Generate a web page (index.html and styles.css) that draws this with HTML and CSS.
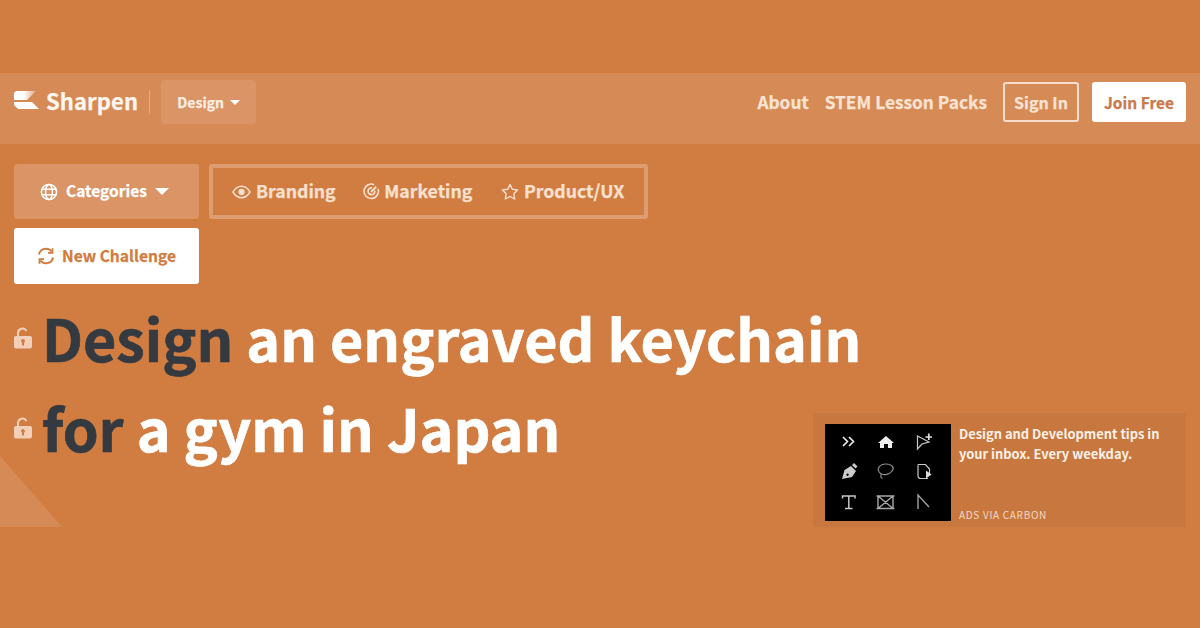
FILE: index.html
```html
<!DOCTYPE html>
<html lang="en">
<head>
<meta charset="utf-8">
<title>Sharpen</title>
<link rel="stylesheet" href="styles.css">
</head>
<body>
<div class="page">
  <nav class="nav">
    <div class="nav-left">
      <svg class="logo" viewBox="0 0 26 18"><defs><linearGradient id="lg" x1="0" x2="1"><stop offset="0" stop-color="#fff"/><stop offset=".45" stop-color="#fff"/><stop offset="1" stop-color="#fff" stop-opacity=".25"/></linearGradient></defs><path d="M2 0H22L13 9H0V2Z" fill="url(#lg)"/><path d="M0 11H18L25 18H4L0 14Z" fill="#fff"/></svg>
      <span class="brand">Sharpen</span>
      <span class="divider"></span>
      <span class="design-btn">Design <i class="caret small"></i></span>
    </div>
    <div class="nav-right">
      <a class="nav-link">About</a>
      <a class="nav-link">STEM Lesson Packs</a>
      <a class="btn-outline">Sign In</a>
      <a class="btn-white">Join Free</a>
    </div>
  </nav>
  <section class="filters">
    <div class="filter-row">
      <div class="categories">
        <svg class="ico big" viewBox="0 0 18 18" fill="none" stroke="#fff" stroke-width="1.5"><circle cx="9" cy="9" r="7.6"/><ellipse cx="9" cy="9" rx="3.4" ry="7.6"/><path d="M1.6 6.3H16.4M1.6 11.700H16.4"/></svg>
        <span class="label">Categories</span><i class="caret"></i>
      </div>
      <div class="tabs">
        <span class="tab"><svg class="ico wide" viewBox="0 0 20 16" fill="none" stroke="currentColor" stroke-width="1.5"><path d="M1 8C3.5 4 6.5 2 10 2s6.500 2 9 6c-2.500 4-5.500 6-9 6s-6.500-2-9-6Z"/><circle cx="10" cy="8" r="3.300" fill="currentColor" stroke="none"/></svg><span class="label">Branding</span></span>
        <span class="tab tab-tight"><svg class="ico" viewBox="0 0 18 18" fill="none" stroke="currentColor" stroke-width="1.700"><path d="M15.800 6A7.600 7.600 0 1 1 11.800 1.800"/><path d="M12.500 8.200A3.600 3.600 0 1 1 9.500 5.200"/><path d="M8.500 9.500 14 4" stroke-width="2"/></svg><span class="label">Marketing</span></span>
        <span class="tab"><svg class="ico big" viewBox="0 0 18 18" fill="none" stroke="currentColor" stroke-width="1.400" stroke-linejoin="round"><path d="M9 1.500 11.300 6.300 16.600 7 12.800 10.700 13.700 16 9 13.500 4.300 16 5.200 10.700 1.400 7 6.700 6.300Z"/></svg><span class="label">Product/UX</span></span>
      </div>
    </div>
    <a class="new-challenge"><svg class="ico big" viewBox="0 0 18 18" fill="none" stroke="currentColor" stroke-width="2"><path d="M2 7.500A7 7 0 0 1 14.500 4.500"/><path d="M16 10.500A7 7 0 0 1 3.500 13.500"/><path d="M15.500 1.200V5.800H11" stroke-width="1.800"/><path d="M2.500 16.800V12.200H7" stroke-width="1.800"/></svg><span class="label-small">New Challenge</span></a>
  </section>
  <section class="hero">
    <div class="title">
      <div class="line">
        <svg class="lock" viewBox="0 0 18 21"><path d="M4 9V5.500A4.500 4.500 0 0 1 12.500 3.500" fill="none" stroke="currentColor" stroke-width="2"/><path fill-rule="evenodd" d="M2 8.500H16a2 2 0 0 1 2 2V19a2 2 0 0 1-2 2H2a2 2 0 0 1-2-2V10.500a2 2 0 0 1 2-2ZM9 11.500a2 2 0 0 0-1 3.700V18h2V15.200a2 2 0 0 0-1-3.700Z" fill="currentColor"/></svg>
        <h1><span class="dark">Design</span> an engraved keychain</h1>
      </div>
      <div class="line">
        <svg class="lock" viewBox="0 0 18 21"><path d="M4 9V5.500A4.500 4.500 0 0 1 12.500 3.500" fill="none" stroke="currentColor" stroke-width="2"/><path fill-rule="evenodd" d="M2 8.500H16a2 2 0 0 1 2 2V19a2 2 0 0 1-2 2H2a2 2 0 0 1-2-2V10.500a2 2 0 0 1 2-2ZM9 11.500a2 2 0 0 0-1 3.700V18h2V15.200a2 2 0 0 0-1-3.700Z" fill="currentColor"/></svg>
        <h1><span class="dark">for</span> a gym in Japan</h1>
      </div>
    </div>
    <aside class="ad">
      <svg class="ad-img" viewBox="0 0 126 97">
        <rect width="126" height="97" fill="#000"/>
        <g fill="none" stroke="#c8c8c8" stroke-width="1.200">
          <path d="M18 13l4.500 4.500L18 22M24 13l4.500 4.500L24 22" stroke="#eee" stroke-width="1.600"/>
          <path d="M92.500 12V25L97 20L104 18Z"/><path d="M100.500 13h6.500M103.800 9.500v6.500" stroke="#ddd" stroke-width="1.700"/>
          <path d="M56 50C50 45 55 40 61 40C67 40 70 44 67 47C64 51 59 51 56.500 50C55 52 56 54 57.500 54.500" stroke="#8c8c8c"/>
          <path d="M93 40.500h7.500l4 4.500v5M103 54.500H95.500a2.500 2.500 0 0 1-2.500-2.500V40.500"/>
          <path d="M17.500 74.500v-2.500H30v2.500M23.800 72V84M20 84.500H27.500" stroke-width="1.500"/>
          <path d="M53 72H68V84.500H53ZM53 72L68 84.500M68 72L53 84.500M51.500 72H54.500M66.500 72H69.500M51.500 84.500H54.500M66.500 84.500H69.500" stroke="#a8a8a8" stroke-width="1.400"/>
          <path d="M93 85V71L104 83" stroke="#a0a0a0" stroke-width="1.400"/>
        </g>
        <path d="M53 19 61 12 69 19H67V24H63V20H59V24H55V19Z" fill="#eee"/>
        <path d="M101 46.500 106.500 50.500 101 54.500Z" fill="#ddd"/>
        <path fill-rule="evenodd" d="M17 55 19.500 46 26 42 31 47 27 53ZM22.500 49.500a1.200 1.200 0 1 0 .1 0Z" fill="#ccc"/>
        <path d="M27 41 29 39 32.500 42.500 30.500 44.500Z" fill="#ccc"/>
      </svg>
      <div class="ad-body">
        <p class="ad-text">Design and Development tips in your inbox. Every weekday.</p>
        <span class="ad-via">ADS VIA CARBON</span>
      </div>
    </aside>
    <div class="tri"></div>
  </section>
</div>
</body>
</html>
```
FILE: styles.css
```css
* { box-sizing: border-box; }
html, body { margin: 0; height: 100%; }
body {
  background: #d17d42;
  font-family: "Noto Sans CJK JP", "Source Sans Pro", "Noto Sans", sans-serif;
  font-weight: 700;
  color: #fff;
  overflow: hidden;
  -webkit-text-stroke: .25px currentColor;
}
.page { padding-top: 73px; height: 628px; }
.nav {
  height: 71px;
  background: #d68a55;
  display: flex;
  justify-content: space-between;
  align-items: center;
  padding: 0 14px 13px;
}
.nav-left, .nav-right { display: flex; align-items: center; }
.logo { width: 26px; height: 18px; margin-right: 6px; margin-top: -4px; }
.brand { font-size: 22px; line-height: 30px; letter-spacing: .1px; margin: -4px 11px 0 0; color: #fdf6f0; }
.divider { width: 1px; height: 24px; background: #e5ab80; margin-right: 11px; }
.design-btn {
  width: 95px; height: 44px;
  background: #da9465;
  border-radius: 3px;
  display: flex; align-items: center; justify-content: center; gap: 6px;
  font-size: 14px;
  color: #fbeee4;
}
.caret {
  width: 0; height: 0;
  border-left: 7.500px solid transparent;
  border-right: 7.500px solid transparent;
  border-top: 7px solid #fff;
}
.caret.small { border-left-width: 5.500px; border-right-width: 5.500px; border-top-width: 5.500px; margin-top: 1px; }
.nav-link { font-size: 17.3px; line-height: 24px; color: #f8e3d3; margin-right: 16px; }
.btn-outline {
  width: 76px; height: 40px; margin-right: 13px;
  border: 2px solid #f6dfce; border-radius: 3px;
  display: flex; align-items: center; justify-content: center;
  font-size: 16px; color: #f8e3d3;
}
.btn-white {
  width: 94px; height: 40px;
  background: #fff; border-radius: 3px;
  display: flex; align-items: center; justify-content: center;
  font-size: 15.5px; color: #c9794a;
}
.filters { padding: 20px 14px 0; }
.filter-row { display: flex; gap: 10px; }
.categories {
  width: 185px; height: 55px;
  background: #da9465; border-radius: 3px;
  display: flex; align-items: center; padding-left: 26px; gap: 8px;
  font-size: 15.5px;
}
.label { margin-top: -4px; }
.label-small { margin-top: -2px; }
.ico { width: 17px; height: 17px; flex: none; }
.ico.wide { width: 19px; height: 16px; }
.ico.big { width: 18px; height: 18px; }
.tabs {
  height: 55px; width: 439px;
  border: 4px solid #dd9d70; border-radius: 3px;
  display: flex; align-items: center; gap: 27.500px; padding-left: 19px;
}
.tab { display: flex; align-items: center; gap: 5px; font-size: 17.7px; color: #f7e0cf; }
.tab-tight { gap: 4px; margin-right: 1px; }
.new-challenge {
  margin-top: 9px;
  width: 185px; height: 56px;
  background: #fff; border-radius: 3px;
  display: flex; align-items: center; justify-content: center; gap: 7px;
  font-size: 15.6px; color: #d07c40;
}
.hero { position: relative; display: flex; padding: 13px 14px 0; height: 243px; }
.title { flex: 1; min-width: 0; }
.line { display: flex; align-items: center; height: 90px; }
.lock { width: 18px; height: 22px; color: #f2cfb8; margin-right: 10px; margin-top: -8px; flex: none; }
h1 { margin: -10px 0 0; font-size: 57.4px; line-height: 90px; font-weight: 700; white-space: nowrap; -webkit-text-stroke: .7px currentColor; }
.dark { color: #343a40; }
.ad {
  flex: none;
  align-self: flex-end;
  width: 373px; height: 114px;
  background: #c8783f;
  padding: 11px 11px 5px 12px;
  display: flex; align-items: stretch; gap: 8px;
}
.ad-img { width: 126px; height: 97px; flex: none; }
.ad-body { display: flex; flex-direction: column; justify-content: space-between; flex: 1; }
.ad-text { margin: 0; font-size: 12.9px; line-height: 20px; font-weight: 700; color: #fbf0e6; -webkit-text-stroke: 0; }
.ad-via { font-size: 10px; line-height: 14px; letter-spacing: .7px; font-weight: 400; color: #f2d9c4; -webkit-text-stroke: 0; }
.tri {
  position: absolute; left: 0; bottom: 0;
  width: 62px; height: 71px;
  background: #d68a55;
  clip-path: polygon(0 0, 100% 100%, 0 100%);
}
```
